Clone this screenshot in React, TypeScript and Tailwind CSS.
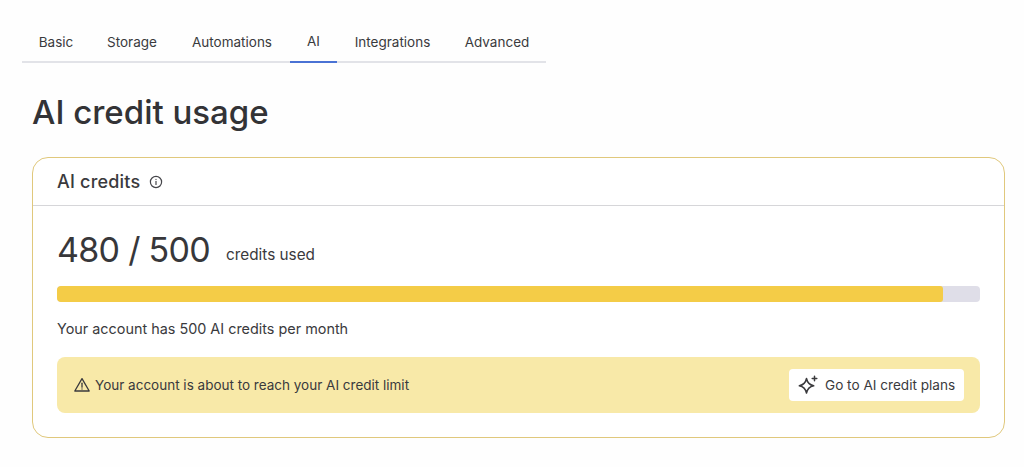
import React from "react";

const tabs = [
  { label: "Basic", w: "w-[68px]" },
  { label: "Storage", w: "w-[84px]" },
  { label: "Automations", w: "w-[116px]" },
  { label: "AI", w: "w-[47px]", active: true },
  { label: "Integrations", w: "w-[111px]" },
  { label: "Advanced", w: "w-[98px]" },
];

export default function App() {
  return (
    <div className="w-[1024px] h-[467px] overflow-hidden bg-[#fefefe] text-[#3a3a3d] font-['Inter','Liberation_Sans',sans-serif] pt-[23px]">
      <div className="ml-[22px] w-[524px] h-[40px] flex border-b-2 border-[#e2e3e8]">
        {tabs.map((t) => (
          <div
            key={t.label}
            className={`${t.w} h-[40px] pb-[2px] flex items-center justify-center text-[13.5px] ${
              t.active ? "border-b-2 border-[#4a72d4]" : ""
            }`}
          >
            {t.label}
          </div>
        ))}
      </div>
      <h1 className="ml-[32px] mt-[28px] h-[42px] text-[33px] leading-[42px] font-medium text-[#333336]">
        AI credit usage
      </h1>
      <div className="ml-[32px] mt-[24px] w-[973px] h-[281px] rounded-[16px] border border-[#e0c87c] bg-white">
        <div className="h-[48px] border-b border-[#d6d6d9] pl-[24px] flex items-center gap-[9px]">
          <span className="text-[18px] font-medium text-[#3a3a3d] tracking-[0.2px]">AI credits</span>
          <svg width="14" height="14" viewBox="0 0 14 14" fill="none" stroke="#45454a" strokeWidth="1.2" strokeLinecap="round">
            <circle cx="7" cy="7" r="5.6" />
            <path d="M7 6.4v3" />
            <path d="M7 4.4v.1" />
          </svg>
        </div>
        <div className="px-[24px] pt-[25px]">
          <div className="flex items-end h-[38px]">
            <span className="text-[34px] leading-[38px] font-normal text-[#37373a] tracking-[-0.7px]">480 / 500</span>
            <span className="ml-[16px] mb-[4px] text-[15.3px] leading-[20px] text-[#3a3a3d]">credits used</span>
          </div>
          <div className="mt-[17px] w-[923px] h-[16px] rounded-[4px] bg-[#dfdee8] overflow-hidden">
            <div className="h-full w-[96%] rounded-[3px] bg-[#f4cc47]" />
          </div>
          <p className="mt-[17px] text-[14.4px] leading-[20px] text-[#3a3a3d]">Your account has 500 AI credits per month</p>
          <div className="mt-[18px] w-[923px] h-[56px] rounded-[8px] bg-[#f8e9a8] pl-[17px] pr-[16px] flex items-center justify-between">
            <div className="flex items-center gap-[5px] text-[13.5px] text-[#3a3a3d]">
              <svg width="16" height="16" viewBox="0 0 16 16" fill="none" stroke="#3a3a3d" strokeWidth="1.3" strokeLinejoin="round" strokeLinecap="round">
                <path d="M8 1.6 15.2 14H.8z" />
                <path d="M8 6.2v4" />
                <path d="M8 12v.1" />
              </svg>
              <span>Your account is about to reach your AI credit limit</span>
            </div>
            <button className="w-[175px] h-[32px] rounded-[4px] bg-white flex items-center pl-[9px] gap-[7px] text-[13.6px] text-[#3a3a3d]">
              <svg width="20" height="20" viewBox="0 0 20 20" fill="none" stroke="#3a3a3d" strokeWidth="1.5" strokeLinejoin="round" strokeLinecap="round">
                <path d="M8.5 3.5c.9 4.4 2.9 6.4 7.2 7.3-4.3.9-6.3 2.9-7.2 7.2-.9-4.3-2.9-6.3-7.2-7.2 4.3-.9 6.3-2.9 7.2-7.3z" />
                <path d="M16.5 1.2v4.6M14.2 3.5h4.6" />
              </svg>
              <span>Go to AI credit plans</span>
            </button>
          </div>
        </div>
      </div>
    </div>
  );
}
